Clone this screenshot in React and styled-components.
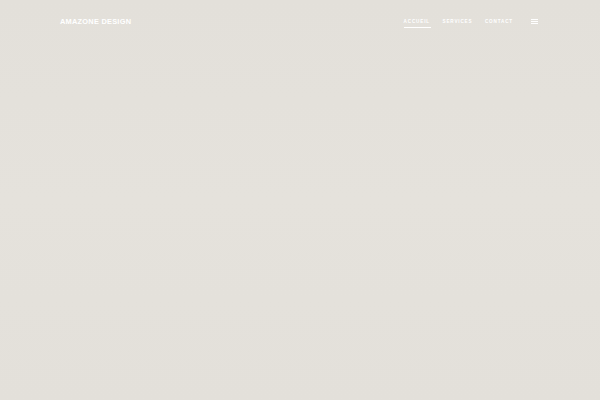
import styled, { createGlobalStyle } from "styled-components";

const GlobalStyle = createGlobalStyle`
  html, body {
    margin: 0;
    padding: 0;
    height: 100%;
  }
  body {
    background: #e4e1db;
    font-family: "Liberation Sans", Arial, sans-serif;
  }
`;

const App = () => {
  return (
    <Page>
      <GlobalStyle />
      <Header>
        <Logo href="#">Amazone Design</Logo>
        <Nav>
          <NavItem href="#" $active>Accueil</NavItem>
          <NavItem href="#">Services</NavItem>
          <NavItem href="#">Contact</NavItem>
          <MenuButton aria-label="menu">
            <span />
            <span />
            <span />
          </MenuButton>
        </Nav>
      </Header>
    </Page>
  );
};

const Page = styled.div`
  width: 600px;
  height: 400px;
  background: linear-gradient(180deg, #e3e0da 0%, #e5e2dc 50%, #e3e0da 100%);
  overflow: hidden;
`;

const Header = styled.header`
  display: flex;
  justify-content: space-between;
  align-items: center;
  padding: 15px 62px 0 60px;
  height: 12px;
`;

const Logo = styled.a`
  color: #ffffff;
  font-size: 7.4px;
  font-weight: 700;
  text-transform: uppercase;
  text-decoration: none;
  letter-spacing: 0.25px;
`;

const Nav = styled.nav`
  display: flex;
  align-items: center;
  gap: 12.5px;
`;

const NavItem = styled.a`
  position: relative;
  color: #ffffff;
  font-size: 4.6px;
  font-weight: 700;
  text-transform: uppercase;
  text-decoration: none;
  letter-spacing: 0.85px;

  &::after {
    content: "";
    display: ${(p) => (p.$active ? "block" : "none")};
    position: absolute;
    left: 0;
    right: -1px;
    bottom: -4px;
    height: 1px;
    background: #ffffff;
  }
`;

const MenuButton = styled.button`
  display: flex;
  flex-direction: column;
  gap: 1px;
  padding: 0;
  margin-left: 5.5px;
  border: 0;
  background: none;
  width: 7px;

  span {
    display: block;
    height: 1px;
    background: #ffffff;
  }
`;

export default App;
